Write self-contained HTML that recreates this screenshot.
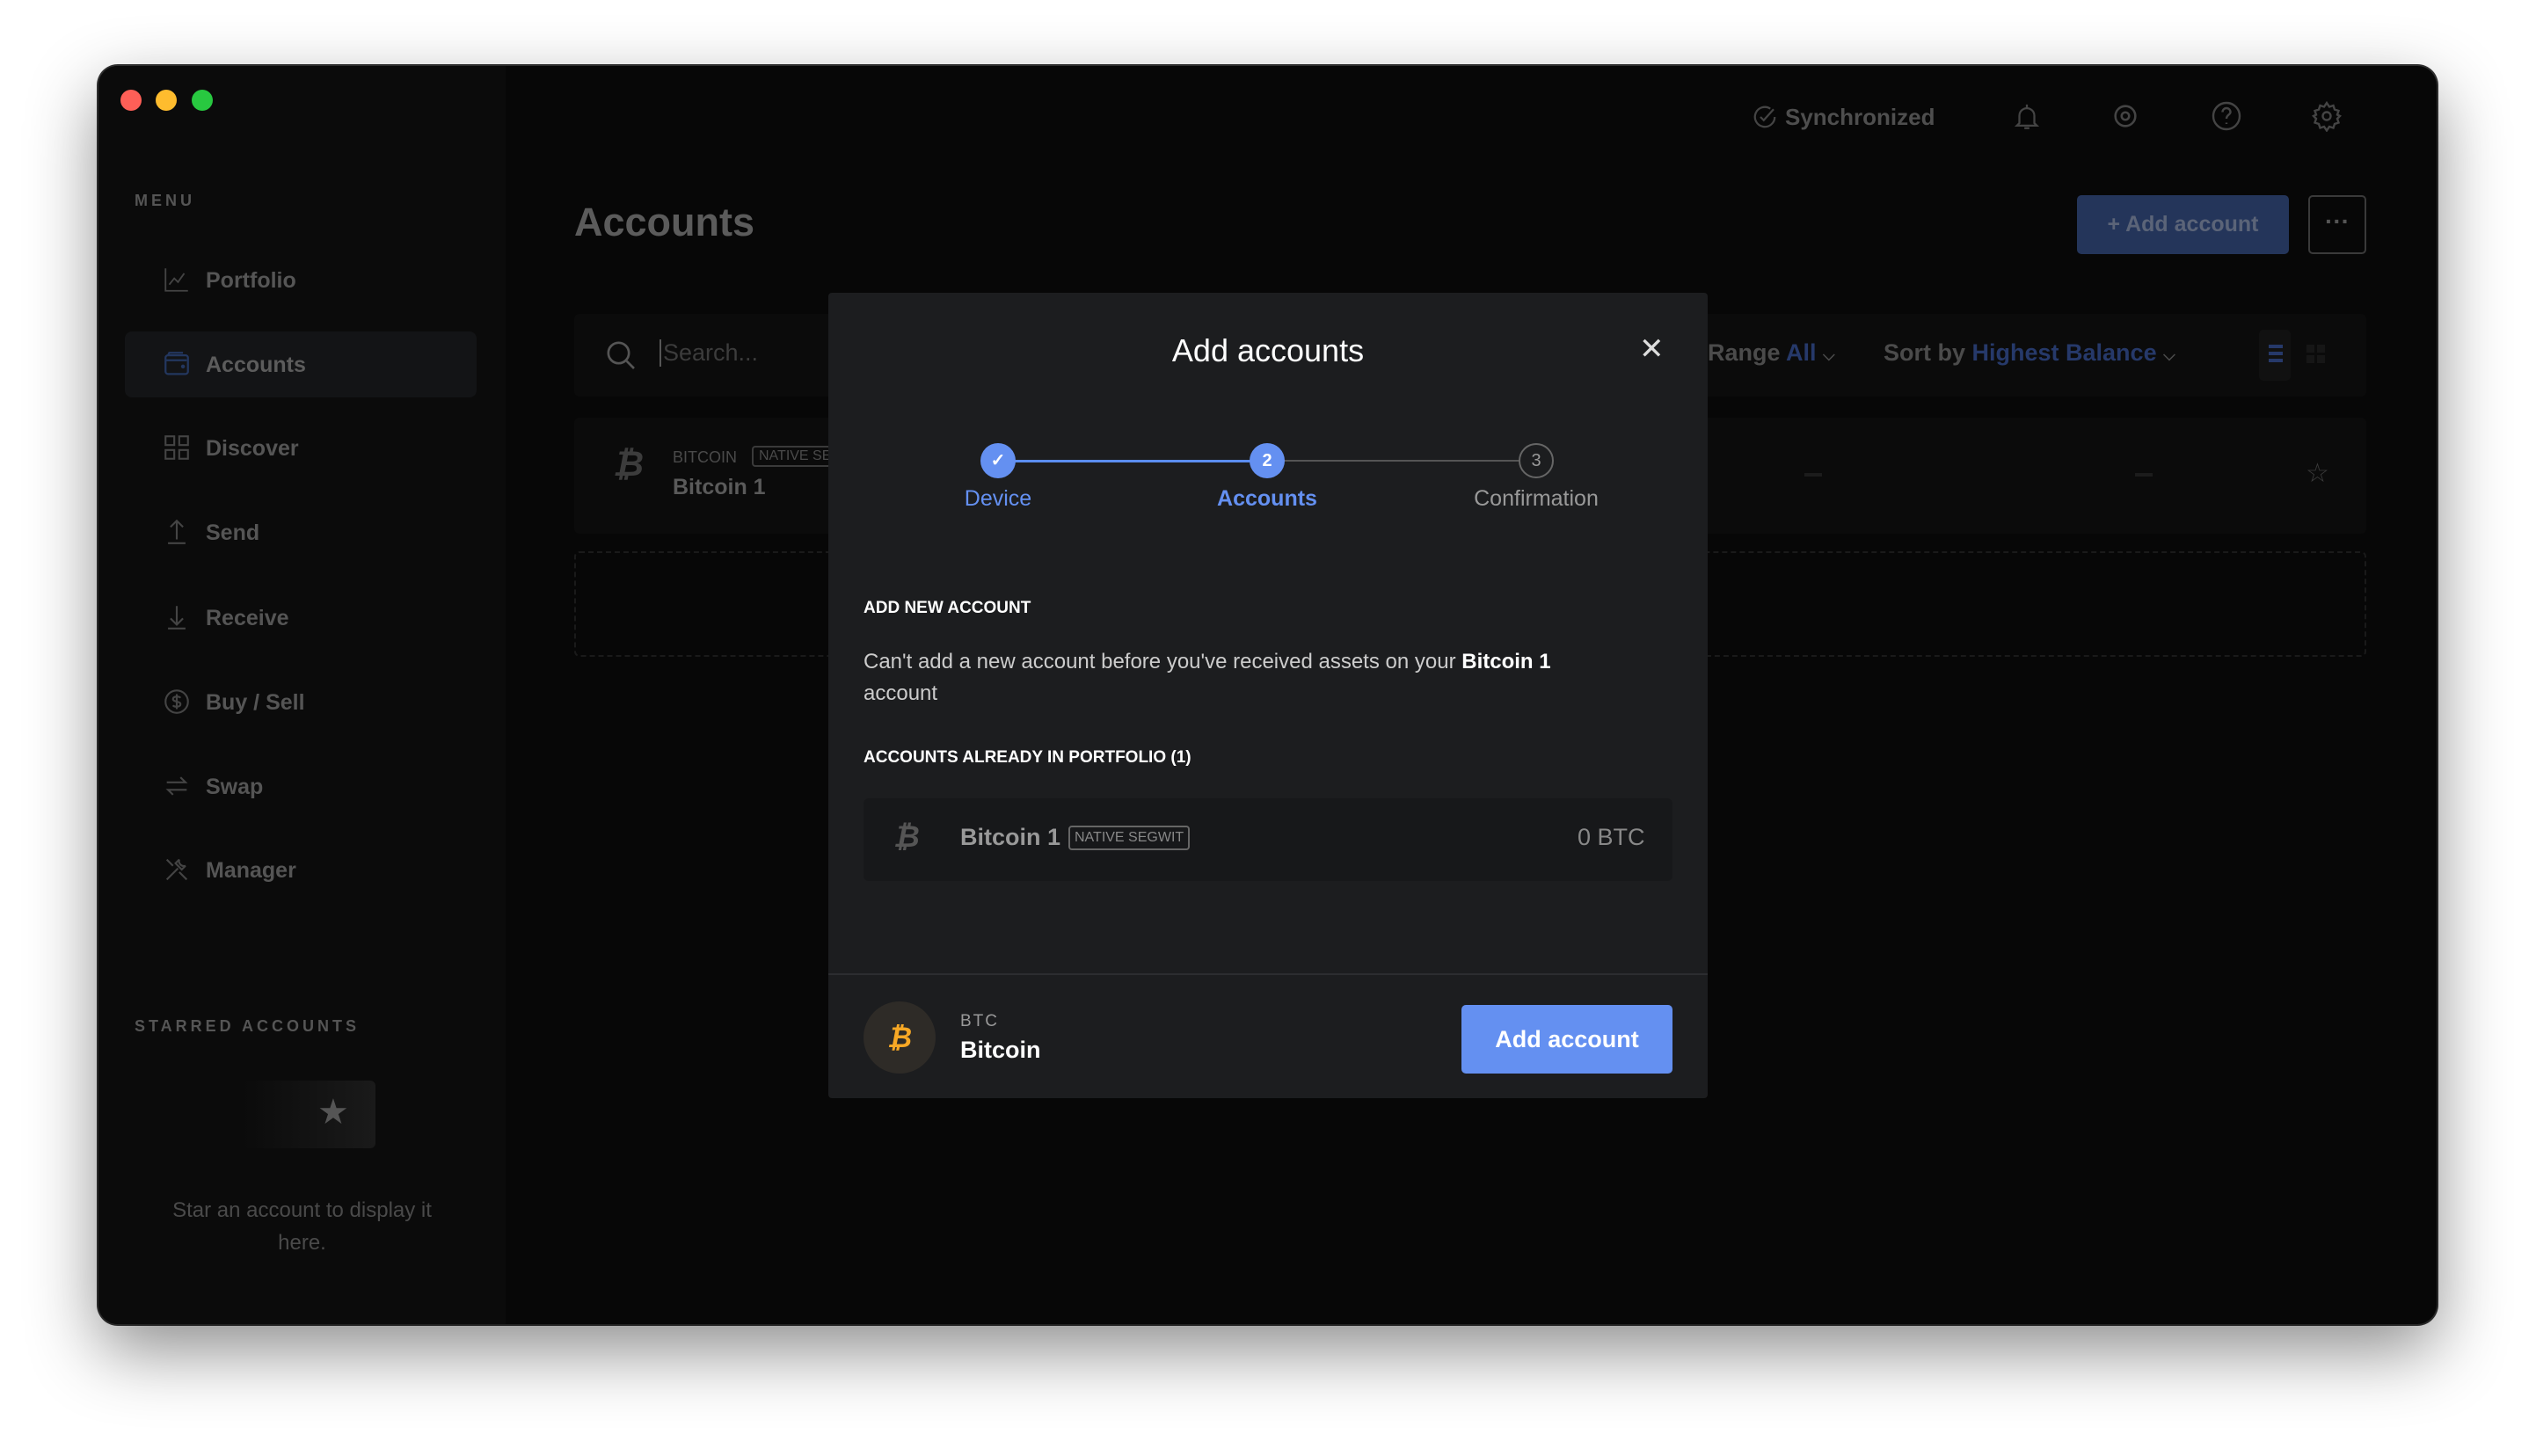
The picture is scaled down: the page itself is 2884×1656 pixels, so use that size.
<!DOCTYPE html>
<html><head><meta charset="utf-8"><style>
*{margin:0;padding:0;box-sizing:border-box}
body{width:2884px;height:1656px;background:#fff;position:relative;overflow:hidden;font-family:"Liberation Sans",sans-serif}
.win{position:absolute;left:112px;top:75px;width:2659px;height:1431px;background:#070707;border-radius:22px;box-shadow:0 30px 80px rgba(0,0,0,.45),0 0 0 2px #333;overflow:hidden}
.side{position:absolute;left:0;top:0;width:463px;height:100%;background:#0b0b0b}
.a{position:absolute;white-space:nowrap}
.dot{position:absolute;width:24px;height:24px;border-radius:50%;top:27px}
.nav{position:absolute;left:122px;font-size:25px;color:#555;font-weight:bold}
.ico{position:absolute;top:-4px;width:34px;height:34px;left:-50px}
.modal{position:absolute;left:830px;top:258px;width:1000px;height:916px;background:#1c1d1f;border-radius:4px}
.step{position:absolute;width:40px;height:40px;border-radius:50%;top:171px;text-align:center;line-height:40px;font-size:20px;font-weight:bold}
.lbl{position:absolute;top:220px;font-size:25px;transform:translateX(-50%)}
</style></head><body>
<div class="win">
<div class="side"></div>
<div class="dot" style="left:25px;background:#fe5f57"></div>
<div class="dot" style="left:65px;background:#febc2e"></div>
<div class="dot" style="left:106px;background:#28c840"></div>

<div class="a" style="left:41px;top:143px;font-size:18px;letter-spacing:4px;color:#555;font-weight:bold">MENU</div>
<div class="a" style="left:30px;top:302px;width:400px;height:75px;background:#131416;border-radius:8px"></div>
<div class="nav" style="top:230px">Portfolio<svg class="ico" viewBox="0 0 24 24" fill="none" stroke="#444" stroke-width="1.3"><path d="M3 3v18h18M6 16l4-5 3 3 5-7"/></svg></div>
<div class="nav" style="top:326px;color:#5c5c5c">Accounts<svg class="ico" viewBox="0 0 24 24" fill="none" stroke="#23375f" stroke-width="1.6"><rect x="3" y="5" width="18" height="15" rx="2"/><path d="M3 9h17M5 5l1-2h11"/><circle cx="17" cy="14" r=".8" fill="#23375f"/></svg></div>
<div class="nav" style="top:421px">Discover<svg class="ico" viewBox="0 0 24 24" fill="none" stroke="#444" stroke-width="1.5"><rect x="3" y="3" width="7" height="7"/><rect x="14" y="3" width="7" height="7"/><rect x="3" y="14" width="7" height="7"/><rect x="14" y="14" width="7" height="7"/></svg></div>
<div class="nav" style="top:517px">Send<svg class="ico" viewBox="0 0 24 24" fill="none" stroke="#444" stroke-width="1.5"><path d="M12 18V3M7 8l5-5 5 5M5 21h14"/></svg></div>
<div class="nav" style="top:614px">Receive<svg class="ico" viewBox="0 0 24 24" fill="none" stroke="#444" stroke-width="1.5"><path d="M12 3v15M7 13l5 5 5-5M5 21h14"/></svg></div>
<div class="nav" style="top:710px">Buy / Sell<svg class="ico" viewBox="0 0 24 24" fill="none" stroke="#444" stroke-width="1.5"><circle cx="12" cy="12" r="9"/><path d="M15 9c-1-1.5-6-1.5-6 1s6 1.5 6 4-5 2.5-6 1M12 6v12"/></svg></div>
<div class="nav" style="top:806px">Swap<svg class="ico" viewBox="0 0 24 24" fill="none" stroke="#444" stroke-width="1.5"><path d="M4 9h15l-4-4M20 15H5l4 4"/></svg></div>
<div class="nav" style="top:901px">Manager<svg class="ico" viewBox="0 0 24 24" fill="none" stroke="#444" stroke-width="1.5"><path d="M4 20l9-9M14 4a4 4 0 005 5l-3 3-5-5zM4 4l5 5M20 20l-6-6"/></svg></div>

<div class="a" style="left:41px;top:1082px;font-size:18px;letter-spacing:4px;color:#555;font-weight:bold">STARRED ACCOUNTS</div>
<div class="a" style="left:164px;top:1154px;width:151px;height:77px;background:linear-gradient(90deg,#0b0b0b,#1a1a1a);border-radius:6px"></div>
<div class="a" style="left:249px;top:1167px;font-size:40px;color:#555">★</div>
<div class="a" style="left:0;width:463px;top:1283px;text-align:center;font-size:24px;color:#4a4a4a;line-height:37px;white-space:normal;padding:0 60px">Star an account to display it here.</div>

<div class="a" style="left:541px;top:152px;font-size:45px;font-weight:bold;color:#5b5b5b">Accounts</div>
<div class="a" style="left:1880px;top:43px;font-size:26px;color:#4e4e4e;font-weight:bold">
<svg width="30" height="30" viewBox="0 0 24 24" fill="none" stroke="#444" stroke-width="1.8" style="vertical-align:-6px;margin-right:8px"><path d="M21 12a9 9 0 11-4-7.5M8 12l3 3 9-10"/></svg>Synchronized</div>
<svg class="a" style="left:2176px;top:38px" width="34" height="40" viewBox="0 0 24 24" fill="none" stroke="#444" stroke-width="1.6"><path d="M6 17V11a6 6 0 0112 0v6l2 2H4zM12 2v3M10 21h4"/></svg>
<svg class="a" style="left:2288px;top:40px" width="34" height="34" viewBox="0 0 24 24" fill="none" stroke="#444" stroke-width="1.8"><circle cx="12" cy="12" r="8"/><circle cx="12" cy="12" r="3"/></svg>
<svg class="a" style="left:2402px;top:39px" width="36" height="36" viewBox="0 0 24 24" fill="none" stroke="#444" stroke-width="1.6"><circle cx="12" cy="12" r="10"/><path d="M9 9a3 3 0 116 0c0 2-3 2-3 5M12 17v1"/></svg>
<svg class="a" style="left:2516px;top:39px" width="36" height="36" viewBox="0 0 24 24" fill="none" stroke="#444" stroke-width="1.6"><circle cx="12" cy="12" r="3"/><path d="M12 2l2 3 3-1 1 3 3 1-1 3 2 1-2 2 1 3-3 1-1 3-3-1-2 3-2-3-3 1-1-3-3-1 1-3-2-2 2-1-1-3 3-1 1-3 3 1z"/></svg>
<div class="a" style="left:2250px;top:147px;width:241px;height:67px;background:#24355a;border-radius:5px;color:#5b6478;font-size:25px;font-weight:bold;line-height:67px;text-align:center">+ Add account</div>
<div class="a" style="left:2513px;top:147px;width:66px;height:67px;border:2px solid #3a3a3a;border-radius:5px;color:#555;text-align:center;line-height:56px;font-size:28px;font-weight:bold">···</div>

<div class="a" style="left:541px;top:282px;width:2038px;height:94px;background:#0b0b0b;border-radius:6px"></div>
<svg class="a" style="left:574px;top:309px" width="40" height="40" viewBox="0 0 24 24" fill="none" stroke="#555" stroke-width="1.6"><circle cx="10.5" cy="10.5" r="7"/><path d="M16 16l5 5"/></svg>
<div class="a" style="left:638px;top:311px;font-size:27px;color:#3c3c3c;border-left:2px solid #555;padding-left:2px">Search...</div>
<div class="a" style="left:1830px;top:311px;font-size:27px;color:#4b4b4b;font-weight:bold">Range <span style="color:#26396a">All</span> <span style="font-size:18px">⌵</span></div>
<div class="a" style="left:2030px;top:311px;font-size:27px;color:#4b4b4b;font-weight:bold">Sort by <span style="color:#26396a">Highest Balance</span> <span style="font-size:18px">⌵</span></div>
<div class="a" style="left:2457px;top:300px;width:36px;height:58px;background:#111;border-radius:5px"></div>
<div class="a" style="left:2468px;top:317px;width:16px;height:4px;background:#26396a;box-shadow:0 8px #26396a,0 16px #26396a"></div>
<div class="a" style="left:2511px;top:317px;width:9px;height:9px;background:#161616;box-shadow:12px 0 #161616,0 12px #161616,12px 12px #161616"></div>

<div class="a" style="left:541px;top:400px;width:2038px;height:132px;background:#0b0b0b;border-radius:6px"></div>
<div class="a" style="left:585px;top:431px;font-size:40px;color:#3c3c3c;font-weight:bold;font-style:italic">₿</div>
<div class="a" style="left:653px;top:435px;font-size:18px;color:#4a4a4a">BITCOIN</div>
<div class="a" style="left:743px;top:432px;font-size:16px;color:#4a4a4a;border:2px solid #3a3a3a;border-radius:4px;padding:1px 6px">NATIVE SEGWIT</div>
<div class="a" style="left:653px;top:465px;font-size:25px;color:#5a5a5a;font-weight:bold">Bitcoin 1</div>
<div class="a" style="left:1940px;top:463px;width:20px;height:4px;background:#1c1c1c"></div>
<div class="a" style="left:2316px;top:463px;width:20px;height:4px;background:#1c1c1c"></div>
<div class="a" style="left:2510px;top:446px;font-size:30px;color:#3c3c3c">☆</div>
<div class="a" style="left:541px;top:552px;width:2038px;height:120px;border:2px dashed #1a1a1a;border-radius:6px"></div>

<div class="modal">
<div class="a" style="left:0;width:1000px;top:45px;text-align:center;font-size:36px;color:#fff">Add accounts</div>
<div class="a" style="left:922px;top:44px;font-size:34px;color:#ddd">✕</div>
<div class="a" style="left:193px;top:190px;width:306px;height:3px;background:#5b8def"></div>
<div class="a" style="left:499px;top:190px;width:306px;height:2px;background:#555"></div>
<div class="step" style="left:173px;background:#6490f1;color:#fff">✓</div>
<div class="step" style="left:479px;background:#6490f1;color:#fff">2</div>
<div class="step" style="left:785px;border:2px solid #666;color:#999;line-height:36px;font-weight:normal;background:#1c1d1f">3</div>
<div class="lbl" style="left:193px;color:#6490f1">Device</div>
<div class="lbl" style="left:499px;color:#6490f1;font-weight:bold">Accounts</div>
<div class="lbl" style="left:805px;color:#999">Confirmation</div>
<div class="a" style="left:40px;top:348px;font-size:19px;font-weight:bold;color:#fff">ADD NEW ACCOUNT</div>
<div class="a" style="left:40px;top:402px;font-size:24px;color:#ccc;line-height:36px;white-space:normal;width:850px">Can't add a new account before you've received assets on your <b style="color:#fff">Bitcoin 1</b> account</div>
<div class="a" style="left:40px;top:518px;font-size:19px;font-weight:bold;color:#fff">ACCOUNTS ALREADY IN PORTFOLIO (1)</div>
<div class="a" style="left:40px;top:575px;width:920px;height:94px;background:#17181a;border-radius:6px"></div>
<div class="a" style="left:74px;top:600px;font-size:34px;color:#555;font-weight:bold;font-style:italic">₿</div>
<div class="a" style="left:150px;top:604px;font-size:27px;color:#999;font-weight:bold">Bitcoin 1</div>
<div class="a" style="left:273px;top:606px;font-size:16px;color:#888;border:2px solid #666;border-radius:4px;padding:3px 5px">NATIVE SEGWIT</div>
<div class="a" style="left:852px;top:604px;font-size:27px;color:#888">0 BTC</div>
<div class="a" style="left:0;top:774px;width:1000px;height:2px;background:#2c2d30"></div>
<div class="a" style="left:40px;top:806px;width:82px;height:82px;border-radius:50%;background:#2e2b27;text-align:center;line-height:82px;font-size:32px;color:#f7a825;font-weight:bold;font-style:italic">₿</div>
<div class="a" style="left:150px;top:818px;font-size:19px;color:#999;letter-spacing:2px">BTC</div>
<div class="a" style="left:150px;top:846px;font-size:27px;color:#fff;font-weight:bold">Bitcoin</div>
<div class="a" style="left:720px;top:810px;width:240px;height:78px;background:#6490f1;border-radius:5px;color:#fff;font-size:27px;font-weight:bold;text-align:center;line-height:78px">Add account</div>
</div>
</div>
</body></html>
